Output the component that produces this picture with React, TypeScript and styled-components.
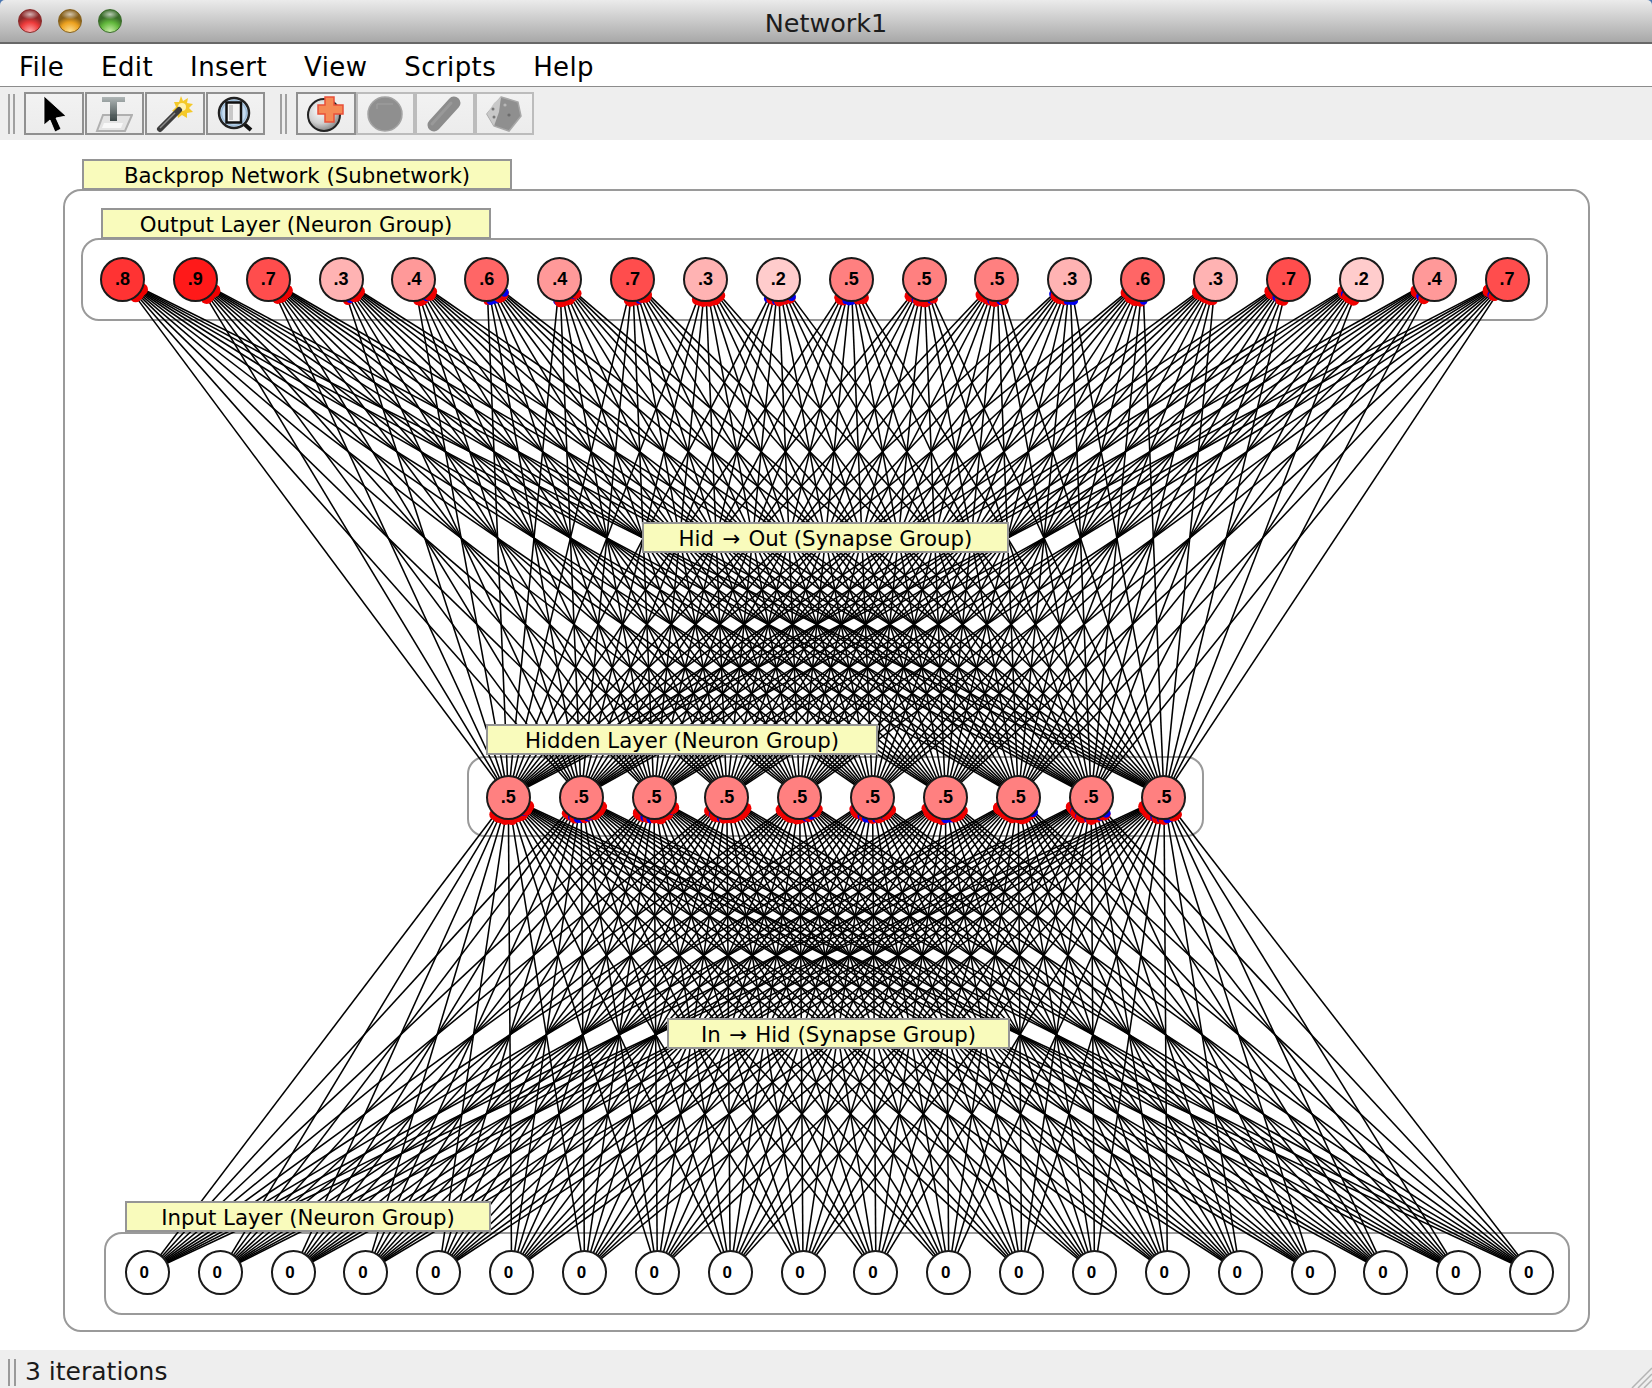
import React from "react";
import styled, { createGlobalStyle } from "styled-components";

const UI_FONT = `"DejaVu Sans", "Noto Sans", sans-serif`;
const CANVAS_TOP = 140;

const GlobalStyle = createGlobalStyle`
	html, body {
		margin: 0;
		padding: 0;
		background: #4a76b0;
	}
`;

const Window = styled.div`
	width: 1652px;
	height: 1388px;
	display: flex;
	flex-direction: column;
	overflow: hidden;
	font-family: ${UI_FONT};
	color: #000;
	border-radius: 5px 5px 0 0;
`;

const TitleBar = styled.div`
	height: 42px;
	flex: none;
	display: flex;
	align-items: center;
	position: relative;
	padding-left: 18px;
	gap: 16px;
	background: linear-gradient(#ebebeb, #a8a8a8);
	border-bottom: 2px solid #686868;
`;

const TrafficLight = styled.div<{ $base: string; $light: string; $dark: string }>`
	width: 24px;
	height: 24px;
	border-radius: 50%;
	box-sizing: border-box;
	border: 1px solid ${(p) => p.$dark};
	background:
		radial-gradient(ellipse 9px 5px at 50% 20%, rgba(255, 255, 255, 0.65), rgba(255, 255, 255, 0) 100%),
		radial-gradient(circle 13px at 50% 100%, ${(p) => p.$light}, ${(p) => p.$base} 75%, ${(p) => p.$dark} 120%);
`;

const WindowTitle = styled.div`
	position: absolute;
	left: 0;
	right: 0;
	top: 7px;
	text-align: center;
	font-size: 25.5px;
	line-height: 32px;
	color: #1c1c1c;
`;

const MenuBar = styled.div`
	height: 43px;
	flex: none;
	display: flex;
	align-items: center;
	padding: 3px 0 0 19px;
	box-sizing: border-box;
	gap: 37px;
	background: #fff;
	border-bottom: 1px solid #8c8c8c;
`;

const MenuItem = styled.div`
	font-size: 26px;
	letter-spacing: 0.4px;
	line-height: 38px;
`;

const Toolbar = styled.div`
	height: 53px;
	flex: none;
	box-sizing: border-box;
	display: flex;
	align-items: flex-start;
	padding: 5px 0 0 8px;
	background: #eeeeee;
`;

const Grip = styled.div`
	width: 7px;
	height: 40px;
	margin-top: 2px;
	box-sizing: border-box;
	border-left: 2px solid #a0a0a0;
	border-right: 2px solid #a0a0a0;
	flex: none;
`;

const ToolGroup = styled.div<{ $joined?: boolean }>`
	display: flex;
	margin: 0 15px 0 9px;
	gap: ${(p) => (p.$joined ? "0" : "1px")};
`;

const ToolButton = styled.div<{ $disabled?: boolean }>`
	width: 59.5px;
	height: 43px;
	box-sizing: border-box;
	border: 2px solid ${(p) => (p.$disabled ? "#bcbcbc" : "#909090")};
	background: linear-gradient(#f2f2f2, #ececec);
	display: flex;
	align-items: center;
	justify-content: center;
`;

const Canvas = styled.div`
	flex: 1;
	position: relative;
	background: #fff;
`;

const GroupBox = styled.div<{ $x: number; $y: number; $w: number; $h: number }>`
	position: absolute;
	left: ${(p) => p.$x}px;
	top: ${(p) => p.$y - CANVAS_TOP}px;
	width: ${(p) => p.$w}px;
	height: ${(p) => p.$h}px;
	box-sizing: border-box;
	border: 2px solid #9a9a9a;
	border-radius: 18px;
`;

const TagLabel = styled.div<{ $x: number; $y: number; $w: number; $h: number }>`
	position: absolute;
	z-index: 3;
	left: ${(p) => p.$x}px;
	top: ${(p) => p.$y - CANVAS_TOP}px;
	width: ${(p) => p.$w}px;
	height: ${(p) => p.$h}px;
	box-sizing: border-box;
	padding-top: 2px;
	border: 2px solid #959595;
	background: #f9fbbc;
	display: flex;
	align-items: center;
	justify-content: center;
	font-size: 21.3px;
	white-space: pre;
`;

const Arrow = styled.span`
	margin: 0 1.5px;
`;

const WireLayer = styled.svg`
	position: absolute;
	z-index: 1;
	left: 0;
	top: 0;
	display: block;
`;

const NeuronNode = styled.div<{ $zero?: boolean }>`
	position: absolute;
	z-index: 2;
	width: 45px;
	height: 45px;
	box-sizing: border-box;
	border: 2px solid #1a1a1a;
	border-radius: 50%;
	display: flex;
	align-items: center;
	justify-content: center;
	font-family: "Liberation Sans", Arial, sans-serif;
	font-weight: 700;
	font-size: ${(p) => (p.$zero ? "17px" : "18px")};
	padding-right: ${(p) => (p.$zero ? "6px" : "0")};
`;

const StatusBar = styled.div`
	height: 38px;
	flex: none;
	position: relative;
	display: flex;
	align-items: center;
	padding-left: 8px;
	gap: 9px;
	background: #eeeeee;
	font-size: 25px;
	color: #1a1a1a;
`;

const StatusGrip = styled.div`
	width: 8px;
	height: 27px;
	margin-top: 6px;
	box-sizing: border-box;
	border-left: 2px solid #9a9a9a;
	border-right: 2px solid #9a9a9a;
`;

const StatusText = styled.div`
	line-height: 38px;
	margin-top: 6px;
`;

const ResizeCorner = styled.svg`
	position: absolute;
	right: 0;
	bottom: 0;
`;

const activations = [0.8, 0.9, 0.7, 0.3, 0.4, 0.6, 0.4, 0.7, 0.3, 0.2, 0.5, 0.5, 0.5, 0.3, 0.6, 0.3, 0.7, 0.2, 0.4, 0.7];

type Pt = { x: number; y: number };

const output: Pt[] = activations.map((_, i) => ({ x: 122.5 + i * 72.87, y: 279 }));
const hidden: Pt[] = Array.from({ length: 10 }, (_, i) => ({ x: 508.3 + i * 72.85, y: 797 }));
const input: Pt[] = Array.from({ length: 20 }, (_, i) => ({ x: 147.3 + i * 72.86, y: 1272.5 }));

// cheap repeatable noise so the synapse dots stay put between runs
const noise = (a: number, b: number) => {
	const v = Math.sin(a * 127.1 + b * 311.7) * 43758.5453;
	return v - Math.floor(v);
};

type Synapse = { from: Pt; to: Pt; cx: number; cy: number; r: number; blue: boolean };

const connect = (sources: Pt[], targets: Pt[], seed: number) => {
	const list: Synapse[] = [];
	targets.forEach((to, t) => {
		sources.forEach((from, s) => {
			const dx = from.x - to.x;
			const dy = from.y - to.y;
			const len = Math.hypot(dx, dy);
			const blue = noise(s + seed, t) < 0.2;
			list.push({
				from,
				to,
				cx: to.x + (dx / len) * 22,
				cy: to.y + (dy / len) * 22,
				r: blue ? 3.5 + noise(t, s + seed) * 1.2 : 3.5 + noise(t + seed, s) * 3,
				blue,
			});
		});
	});
	return list;
};

const synapses = [...connect(hidden, output, 3), ...connect(input, hidden, 11)];

const Wires = () => (
	<WireLayer width={1652} height={1210} viewBox={`0 ${CANVAS_TOP} 1652 1210`}>
		{synapses.map((s, i) => (
			<line key={i} x1={s.from.x} y1={s.from.y} x2={s.cx} y2={s.cy} stroke="#000" strokeWidth={1.55} />
		))}
		{synapses.map((s, i) => (
			<circle key={i} cx={s.cx} cy={s.cy} r={s.r} fill={s.blue ? "#0000f0" : "#f00000"} />
		))}
	</WireLayer>
);

const neuronFill = (a: number) => {
	const v = Math.round(255 * (1 - a));
	return `rgb(255, ${v}, ${v})`;
};

const Neuron = ({ at, value }: { at: Pt; value: number }) => (
	<NeuronNode
		$zero={value === 0}
		style={{ left: at.x - 22.5, top: at.y - 22.5 - CANVAS_TOP, background: neuronFill(value) }}
	>
		{value === 0 ? "0" : value.toFixed(1).slice(1)}
	</NeuronNode>
);

const ArrowIcon = () => (
	<svg width="36" height="38" viewBox="0 0 36 38">
		<path d="M8 1 L8 30 L14 25 L19 37 L25 34 L20 23 L30 21 Z" fill="#000" stroke="#fff" strokeWidth="0.8" />
	</svg>
);

const TextToolIcon = () => (
	<svg width="38" height="38" viewBox="0 0 38 38">
		<defs>
			<linearGradient id="tbar" x1="0" y1="0" x2="0" y2="1">
				<stop offset="0" stopColor="#a8b0b0" />
				<stop offset="1" stopColor="#2b3838" />
			</linearGradient>
		</defs>
		<path d="M8 20 L37 20 L30 36 L2 36 Z" fill="#e4e4e4" stroke="#b0b0b0" strokeWidth="2" />
		<path d="M9 28 L28 28 L26 33 L7 33 Z" fill="#f8f8f8" />
		<path d="M7 2 H30 V7 H22 V26 H15 V7 H7 Z" fill="url(#tbar)" opacity="0.9" />
	</svg>
);

const WandIcon = () => (
	<svg width="38" height="38" viewBox="0 0 38 38">
		<path
			d="M25 1 L27 6 L32 3 L31 8 L37 9 L33 13 L37 17 L31 18 L31 23 L26 20 L22 23 L21 18 L16 16 L20 12 L18 7 L23 7 Z"
			fill="#f4c92a"
		/>
		<circle cx="26" cy="12" r="4" fill="#fff3b0" />
		<path d="M4 34 L23 15" stroke="#3c3c3c" strokeWidth="6" strokeLinecap="round" />
		<path d="M4 33 L19 18" stroke="#8a8a8a" strokeWidth="1.5" />
	</svg>
);

const ZoomIcon = () => (
	<svg width="38" height="38" viewBox="0 0 38 38">
		<path d="M27 28 L35 35" stroke="#111" strokeWidth="4" />
		<circle cx="18" cy="18" r="15" fill="#c6dcf0" stroke="#222" strokeWidth="2.5" />
		<circle cx="18" cy="18" r="12.5" fill="none" stroke="#9dbcd8" strokeWidth="1.5" />
		<rect x="10.5" y="7.5" width="14.5" height="20" fill="#f4f4f4" stroke="#111" strokeWidth="2.5" />
		<rect x="13" y="10" width="4" height="15" fill="#c8c8c8" />
	</svg>
);

const AddNeuronIcon = () => (
	<svg width="40" height="40" viewBox="0 0 40 40">
		<defs>
			<radialGradient id="ball" cx="0.4" cy="0.35" r="0.75">
				<stop offset="0" stopColor="#ffffff" />
				<stop offset="0.55" stopColor="#d0d0d0" />
				<stop offset="1" stopColor="#6a6a6a" />
			</radialGradient>
		</defs>
		<circle cx="18" cy="21" r="16" fill="url(#ball)" stroke="#222" strokeWidth="2" />
		<path d="M19 3 H28 V11 H37 V20 H28 V28 H19 V20 H12 V11 H19 Z" fill="#f58a55" stroke="#e8503a" strokeWidth="1.5" />
	</svg>
);

const DiscIcon = () => (
	<svg width="38" height="38" viewBox="0 0 38 38">
		<circle cx="19" cy="19" r="17" fill="#8f8f8f" stroke="#a4a4a4" strokeWidth="1.5" />
		<path d="M11 9 H27 M11 9 V14" stroke="#9c9c9c" strokeWidth="1.5" fill="none" />
	</svg>
);

const PillIcon = () => (
	<svg width="38" height="38" viewBox="0 0 38 38">
		<path d="M8 30 L28 8" stroke="#8c8c8c" strokeWidth="13" strokeLinecap="round" />
		<path d="M6 29 L25 8" stroke="#999" strokeWidth="3" strokeLinecap="round" />
	</svg>
);

const DieIcon = () => (
	<svg width="38" height="38" viewBox="0 0 38 38">
		<path d="M16 2 L33 7 L36 21 L24 36 L9 31 L2 19 Z" fill="#8f8f8f" stroke="#a8a8a8" strokeWidth="1.5" />
		<path d="M16 2 L9 8 L2 19 L9 31 L14 17 Z" fill="#c8c8c8" />
		<circle cx="8" cy="14" r="1.5" fill="#777" />
		<circle cx="9" cy="22" r="1.5" fill="#777" />
		<circle cx="24" cy="20" r="1.6" fill="#6c6c6c" />
		<circle cx="20" cy="10" r="1.6" fill="#b8b8b8" />
	</svg>
);

const menus = ["File", "Edit", "Insert", "View", "Scripts", "Help"];

export default function App() {
	return (
		<Window>
			<GlobalStyle />
			<TitleBar>
				<TrafficLight $base="#ee3b3b" $light="#ffb0b0" $dark="#8a2a2a" />
				<TrafficLight $base="#eca11f" $light="#ffe59a" $dark="#86601c" />
				<TrafficLight $base="#62b83c" $light="#d0f0b0" $dark="#3a6c2a" />
				<WindowTitle>Network1</WindowTitle>
			</TitleBar>
			<MenuBar>
				{menus.map((m) => (
					<MenuItem key={m}>{m}</MenuItem>
				))}
			</MenuBar>
			<Toolbar>
				<Grip />
				<ToolGroup>
					<ToolButton><ArrowIcon /></ToolButton>
					<ToolButton><TextToolIcon /></ToolButton>
					<ToolButton><WandIcon /></ToolButton>
					<ToolButton><ZoomIcon /></ToolButton>
				</ToolGroup>
				<Grip />
				<ToolGroup $joined>
					<ToolButton><AddNeuronIcon /></ToolButton>
					<ToolButton $disabled><DiscIcon /></ToolButton>
					<ToolButton $disabled><PillIcon /></ToolButton>
					<ToolButton $disabled><DieIcon /></ToolButton>
				</ToolGroup>
			</Toolbar>
			<Canvas>
				<GroupBox $x={63} $y={189} $w={1527} $h={1143} />
				<GroupBox $x={81} $y={238} $w={1467} $h={83} />
				<GroupBox $x={467} $y={756} $w={737} $h={81} />
				<GroupBox $x={104} $y={1232} $w={1466} $h={83} />
				<Wires />
				{output.map((p, i) => (
					<Neuron key={i} at={p} value={activations[i]} />
				))}
				{hidden.map((p, i) => (
					<Neuron key={i} at={p} value={0.5} />
				))}
				{input.map((p, i) => (
					<Neuron key={i} at={p} value={0} />
				))}
				<TagLabel $x={82} $y={159} $w={430} $h={31}>Backprop Network (Subnetwork)</TagLabel>
				<TagLabel $x={101} $y={208} $w={390} $h={31}>Output Layer (Neuron Group)</TagLabel>
				<TagLabel $x={642} $y={522} $w={367} $h={31}>Hid <Arrow>→</Arrow> Out (Synapse Group)</TagLabel>
				<TagLabel $x={486} $y={724} $w={392} $h={31}>Hidden Layer (Neuron Group)</TagLabel>
				<TagLabel $x={667} $y={1018} $w={343} $h={31}>In <Arrow>→</Arrow> Hid (Synapse Group)</TagLabel>
				<TagLabel $x={125} $y={1201} $w={366} $h={31}>Input Layer (Neuron Group)</TagLabel>
			</Canvas>
			<StatusBar>
				<StatusGrip />
				<StatusText>3 iterations</StatusText>
				<ResizeCorner width="22" height="22" viewBox="0 0 22 22">
					<path d="M2 22 L22 2 M8 22 L22 8 M14 22 L22 14" stroke="#b4b4b4" strokeWidth="1.5" />
				</ResizeCorner>
			</StatusBar>
		</Window>
	);
}
